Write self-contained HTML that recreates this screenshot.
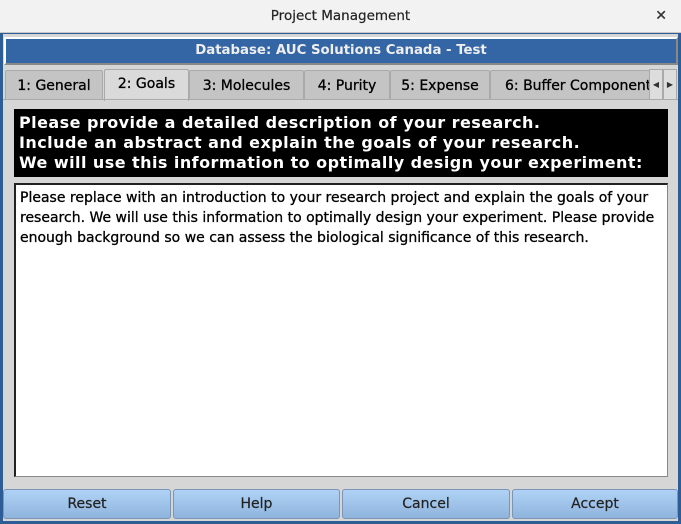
<!DOCTYPE html>
<html><head><style>
*{margin:0;padding:0;box-sizing:border-box}
body{width:681px;height:524px;background:#2e5d96;font-family:"DejaVu Sans",sans-serif;position:relative;overflow:hidden}
.title{position:absolute;left:0;top:0;width:681px;height:33px;background:#f2f2f2;border-bottom:1px solid #c8c8c8;text-align:center;font-size:13.5px;line-height:33px;color:#222;-webkit-text-stroke:0.2px #222}
.x{position:absolute;right:14px;top:0;font-size:14px;font-weight:bold;color:#333}
.win{position:absolute;left:3px;top:34px;width:675px;height:487px;background:#d6d6d6}
.hdr{position:absolute;left:1px;top:3px;width:674px;height:28px;background:#3465a4;border:2px solid #fff;border-right-color:#888;border-bottom-color:#888;color:#eee;font-weight:bold;font-size:13.3px;text-align:center;line-height:24px}
.tab{position:absolute;top:36px;height:30px;background:#c4c4c4;border:1px solid #aaa;border-bottom:none;font-size:14px;line-height:30px;text-align:center;color:#000;-webkit-text-stroke:0.3px #000;border-radius:2px 2px 0 0}
.tab.sel{background:#dadada;top:35px;height:32px;line-height:28px}
.pane{position:absolute;left:0;top:65px;width:675px;height:387px;border-top:1px solid #aaa}
.blk{position:absolute;left:11px;top:75px;width:654px;height:68px;background:#000;color:#fff;font-weight:bold;font-size:16px;letter-spacing:0.45px;line-height:20px;padding:4px 5px;white-space:nowrap;overflow:hidden}
.ta{position:absolute;left:11px;top:149px;width:654px;height:294px;background:#fff;border:1px solid #888;border-top:2px solid #222;border-left:2px solid #222;font-size:14px;line-height:20px;padding:3px 4px;color:#000;-webkit-text-stroke:0.3px #000}
.btn{position:absolute;top:455px;height:30px;background:linear-gradient(#b0d2f6,#8fb4dc);border:1px solid #7a95b5;border-radius:3px;font-size:14px;line-height:28px;text-align:center;color:#222;-webkit-text-stroke:0.2px #222}
.arr{position:absolute;top:35px;width:14px;height:31px;background:#ddd;border:1px solid #aaa;font-size:8px;line-height:30px;text-align:center;color:#333}
</style></head><body>
<div class="title">Project Management<span class="x">✕</span></div>
<div class="win">
<div class="hdr">Database: AUC Solutions Canada - Test</div>
<div class="tab" style="left:2px;width:98px">1: General</div>
<div class="tab sel" style="left:101px;width:85px">2: Goals</div>
<div class="tab" style="left:186px;width:115px">3: Molecules</div>
<div class="tab" style="left:301px;width:86px">4: Purity</div>
<div class="tab" style="left:387px;width:100px">5: Expense</div>
<div class="tab" style="left:487px;width:160px;text-align:left;padding-left:14px;overflow:hidden;white-space:nowrap">6: Buffer Components</div>
<div class="arr" style="left:646px">◀</div>
<div class="arr" style="left:660px">▶</div>
<div class="pane"></div>
<div class="blk">Please provide a detailed description of your research.<br>Include an abstract and explain the goals of your research.<br>We will use this information to optimally design your experiment:</div>
<div class="ta">Please replace with an introduction to your research project and explain the goals of your research. We will use this information to optimally design your experiment. Please provide enough background so we can assess the biological significance of this research.</div>
<div class="btn" style="left:0;width:168px">Reset</div>
<div class="btn" style="left:170px;width:167px">Help</div>
<div class="btn" style="left:339px;width:168px">Cancel</div>
<div class="btn" style="left:509px;width:166px">Accept</div>
</div>
</body></html>
